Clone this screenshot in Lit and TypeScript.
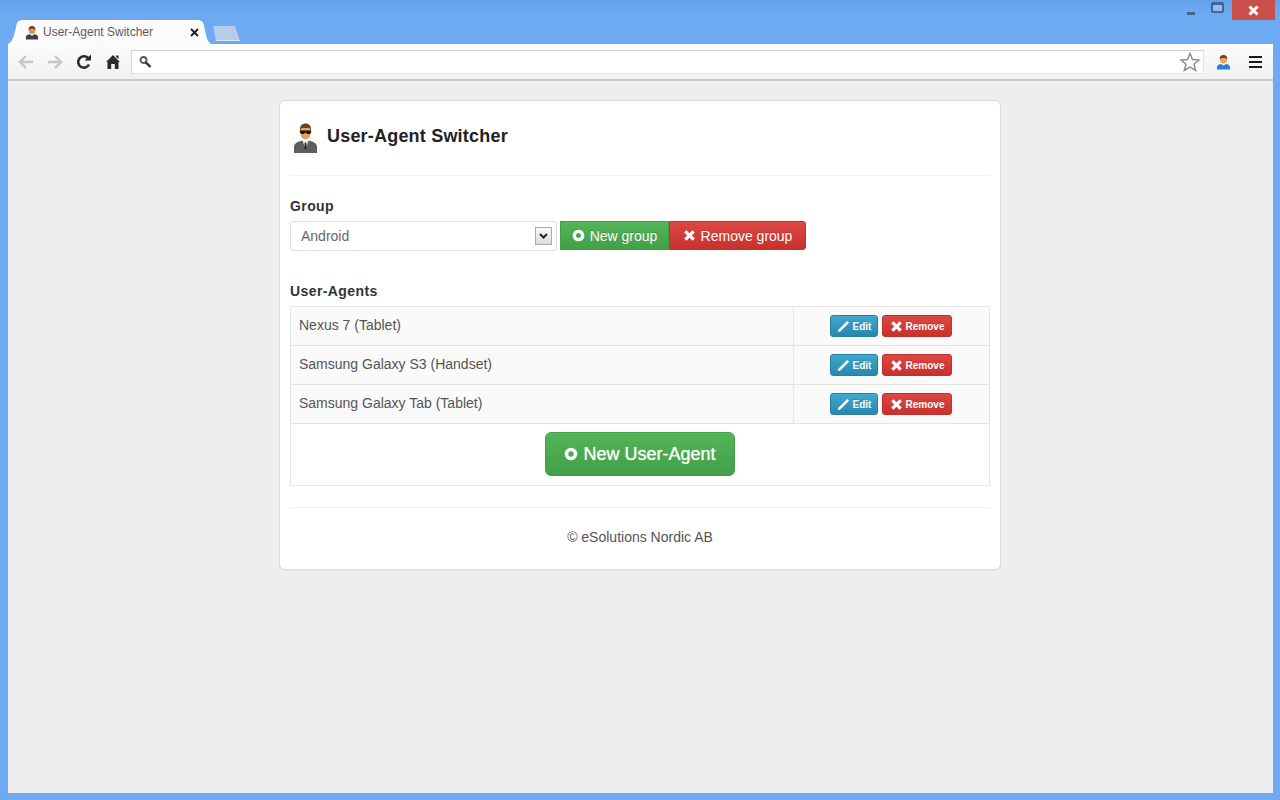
import { LitElement, html, css, svg } from "lit";
import { customElement, property } from "lit/decorators.js";

const agentIcon = svg`
  <path d="M1 30 V24 C1 20 5 18.5 9 17.5 L12.500 20 L16 17.500 C20 18.500 24 20 24 24 V30 Z" fill="#5b5f60"/>
  <path d="M9.500 17.500 L12.500 27 L15.500 17.500 L12.500 19.500 Z" fill="#e8e8e4"/>
  <path d="M11.800 19.500 H13.200 L13.800 25 L12.500 27 L11.200 25 Z" fill="#23262a"/>
  <ellipse cx="12.500" cy="9.500" rx="5.300" ry="7" fill="#e0a35c"/>
  <path d="M7 8 C6.500 2.500 9 0.500 12.500 0.500 C16 0.500 18.500 2.500 18 8 L16.500 5 H8.500 Z" fill="#6b4520"/>
  <path d="M6.800 7.500 H18.200 V9 L16.800 11 H14 L12.800 9.500 H12.200 L11 11 H8.200 L6.800 9 Z" fill="#15171a"/>`;

const userIcon = svg`
  <path d="M1 15 V12.500 C1 10.500 3.500 9.500 5 9.500 L7.500 11 L10 9.500 C11.500 9.500 14 10.500 14 12.500 V15 Z" fill="#2d7fd6"/>
  <circle cx="7.500" cy="5.500" r="3.500" fill="#e8a866"/>
  <path d="M3.800 5 C3.500 1.500 5.500 0.500 7.500 0.500 C9.500 0.500 11.500 1.500 11.200 5 L9.500 3.500 H5.500 Z" fill="#7d3a1b"/>`;

const userIconDark = svg`
  <path d="M1 15 V12.500 C1 10.500 3.500 9.500 5 9.500 L7.500 11 L10 9.500 C11.500 9.500 14 10.500 14 12.500 V15 Z" fill="#3f3f46"/>
  <circle cx="7.500" cy="5.500" r="3.500" fill="#d9965c"/>
  <path d="M3.800 5 C3.500 1.500 5.500 0.500 7.500 0.500 C9.500 0.500 11.500 1.500 11.200 5 L9.500 3.500 H5.500 Z" fill="#7d3a1b"/>`;

@customElement("glyph-icon")
export class GlyphIcon extends LitElement {
  @property({ type: String })
  name: string = "plus";

  static styles = css`
    :host {
      display: inline-flex;
    }
    svg {
      width: 1em;
      height: 1em;
      display: block;
    }
  `;

  render() {
    if (this.name === "plus") {
      return html`<svg viewBox="0 0 14 14">
        <circle cx="7" cy="7" r="4.500" fill="none" stroke="currentColor" stroke-width="3.600"></circle>
      </svg>`;
    }
    if (this.name === "remove") {
      return html`<svg viewBox="0 0 14 14">
        <path d="M2.500 2.500 L11.500 11.500 M11.500 2.500 L2.500 11.500" stroke="currentColor" stroke-width="3.400" fill="none"></path>
      </svg>`;
    }
    return html`<svg viewBox="0 0 14 14">
      <path d="M1 13 L1.500 10.500 L11 1 L13 3 L3.500 12.500 Z" fill="currentColor"></path>
    </svg>`;
  }
}

@customElement("app-root")
export class AppRoot extends LitElement {
  static styles = css`
    :host {
      display: flex;
      flex-direction: column;
      width: 1280px;
      height: 800px;
      box-sizing: border-box;
      padding: 0 7px 7px 8px;
      overflow: hidden;
      background: linear-gradient(#62a0ea, #6eaaf1 12px);
      font-family: "Liberation Sans", Arial, sans-serif;
      color: #333;
    }

    /* browser frame */
    .strip {
      display: flex;
      align-items: flex-end;
      height: 44px;
      flex: none;
    }
    .tab {
      width: 203px;
      height: 24px;
      box-sizing: border-box;
      display: flex;
      align-items: center;
      padding: 0 12px 0 17px;
      gap: 4px;
      background: #fbfbfb;
      clip-path: path("M0 24 C4 22 6 17 8 7 C9 2 10 0 15 0 H189 C194 0 195 2 196 6 C198 15 199 22 203 24 Z");
      font-size: 12px;
      color: #5d5a5e;
    }
    .fav {
      width: 14px;
      height: 15px;
      flex: none;
    }
    .tab span {
      flex: 1;
    }
    .tab-close {
      width: 9px;
      height: 9px;
      flex: none;
    }
    .new-tab {
      width: 29px;
      height: 15px;
      margin: 0 0 3px 0;
      background: #b5cdea;
      border-bottom: 1px solid #dbe7f5;
      box-sizing: border-box;
      clip-path: polygon(2px 0, 24px 0, 29px 100%, 5px 100%);
    }
    .controls {
      margin-left: auto;
      margin-right: -2px;
      align-self: flex-start;
      display: flex;
      align-items: flex-start;
    }
    .win-btn {
      width: 30px;
      height: 20px;
      display: flex;
      align-items: center;
      justify-content: center;
    }
    .min-glyph {
      width: 8px;
      height: 3px;
      margin: 7px 0 0 8px;
      background: #3f6590;
    }
    .max-glyph {
      width: 9px;
      height: 6px;
      margin-top: -6px;
      border: 2px solid #3f6590;
      border-top-width: 3px;
      border-radius: 2px;
      background: #8fbdf2;
    }
    .close {
      width: 43px;
      height: 20px;
      background: #c9504a;
      display: flex;
      align-items: center;
      justify-content: center;
    }
    .close svg {
      width: 11px;
      height: 11px;
    }
    .toolbar {
      height: 37px;
      flex: none;
      box-sizing: border-box;
      display: flex;
      align-items: flex-start;
      padding: 6px 11px 0 3px;
      background: linear-gradient(#fcfcfc, #f1f1f1);
      border-bottom: 2px solid #c9c9c9;
    }
    .nav {
      width: 29px;
      height: 24px;
      display: flex;
      align-items: center;
      justify-content: center;
      flex: none;
    }
    .nav svg {
      width: 18px;
      height: 18px;
    }
    .omnibox {
      flex: 1;
      height: 24px;
      margin: 0 0 0 4px;
      box-sizing: border-box;
      display: flex;
      align-items: center;
      justify-content: space-between;
      padding: 0 2px 0 6px;
      background: #fff;
      border: 1px solid #e2e2e2;
      border-top-color: #cfcfcf;
      border-left-color: #d8d8d8;
    }
    .omnibox svg {
      display: block;
    }
    .search {
      width: 14px;
      height: 14px;
    }
    .star {
      width: 22px;
      height: 22px;
    }
    .avatar {
      width: 15px;
      height: 16px;
      margin: 4px 0 0 12px;
      flex: none;
    }
    .menu {
      width: 13px;
      height: 12px;
      margin: 6px 0 0 18px;
      flex: none;
      box-sizing: border-box;
      border-top: 2px solid #1a1a1a;
      border-bottom: 2px solid #1a1a1a;
      display: flex;
      align-items: center;
    }
    .menu i {
      display: block;
      width: 100%;
      height: 2px;
      background: #1a1a1a;
    }

    /* page */
    .page {
      flex: 1;
      background: #eeedf0;
      display: flex;
      justify-content: center;
      align-items: flex-start;
      padding-top: 19px;
    }
    .card {
      width: 722px;
      height: 470px;
      box-sizing: border-box;
      margin-left: -1px;
      padding: 0 10px;
      background: #fff;
      border: 1px solid #dcdcdc;
      border-radius: 6px;
      box-shadow: 0 1px 1px rgba(0, 0, 0, 0.05);
    }
    .head {
      display: flex;
      align-items: center;
      gap: 9px;
      height: 74px;
      padding: 0 0 0 3px;
      border-bottom: 1px solid #f1f1f1;
    }
    .head svg {
      width: 25px;
      height: 30px;
    }
    h1 {
      margin: -4px 0 0;
      font-size: 18px;
      font-weight: bold;
      letter-spacing: 0.2px;
      color: #222;
    }
    .label {
      display: block;
      font-size: 14px;
      font-weight: bold;
      line-height: 20px;
      letter-spacing: 0.4px;
      color: #333;
    }
    .group {
      margin-top: 20px;
    }
    .group-row {
      display: flex;
      margin-top: 5px;
      height: 30px;
    }
    .select {
      width: 267px;
      height: 30px;
      box-sizing: border-box;
      display: flex;
      align-items: center;
      justify-content: space-between;
      padding: 0 4px 0 10px;
      margin-right: 3px;
      border: 1px solid #ddd;
      border-radius: 3px;
      font-size: 14px;
      color: #666;
    }
    .caret {
      width: 17px;
      height: 18px;
      box-sizing: border-box;
      border: 1px solid #aaa;
      background: linear-gradient(#fafafa, #dcdcdc);
      display: flex;
      align-items: center;
      justify-content: center;
    }
    .caret svg {
      width: 9px;
      height: 6px;
    }
    .btn {
      display: inline-flex;
      align-items: center;
      justify-content: center;
      box-sizing: border-box;
      color: #fff;
      border-radius: 3px;
      white-space: nowrap;
      text-shadow: 0 -1px 0 rgba(0, 0, 0, 0.15);
    }
    .green {
      background: linear-gradient(#53b457, #429f48);
      border: 1px solid #43a049;
    }
    .red {
      background: linear-gradient(#dc4744, #c9302c);
      border: 1px solid #c42f2b;
    }
    .blue {
      background: linear-gradient(#3fa9cf, #2787ad);
      border: 1px solid #2780a3;
    }
    .group-row .btn {
      height: 29px;
      font-size: 14px;
      gap: 5px;
    }
    .group-row glyph-icon {
      font-size: 13px;
    }
    .new-group {
      width: 109px;
      border-radius: 0;
    }
    .remove-group {
      width: 137px;
      border-radius: 0 3px 3px 0;
    }
    .agents {
      margin-top: 30px;
    }
    .table {
      margin-top: 5px;
      width: 700px;
      border: 1px solid #e6e6e6;
      box-sizing: border-box;
    }
    .row {
      display: grid;
      grid-template-columns: 503px 1fr;
      height: 39px;
      box-sizing: border-box;
      background: #fafafa;
      border-bottom: 1px solid #e4e4e4;
    }
    .row .name {
      display: flex;
      align-items: center;
      padding: 0 0 2px 8px;
      font-size: 14px;
      color: #555;
      border-right: 1px solid #e8e8e8;
    }
    .row .actions {
      display: flex;
      align-items: center;
      gap: 4px;
      padding-left: 36px;
    }
    .row .btn {
      height: 22px;
      font-size: 10px;
      font-weight: bold;
      gap: 3px;
    }
    .row glyph-icon {
      font-size: 13px;
    }
    .edit {
      width: 48px;
    }
    .remove {
      width: 70px;
    }
    .add-row {
      height: 61px;
      display: flex;
      justify-content: center;
      align-items: flex-start;
      padding-top: 8px;
      box-sizing: border-box;
    }
    .add {
      width: 190px;
      height: 44px;
      gap: 5px;
      font-size: 18px;
      border-radius: 6px;
      text-shadow: 0 0 1px rgba(255, 255, 255, 0.7);
    }
    .add glyph-icon {
      font-size: 14px;
    }
    .foot {
      margin-top: 21px;
      padding-top: 19px;
      border-top: 1px solid #f1f1f1;
      text-align: center;
      font-size: 14px;
      line-height: 20px;
      color: #555;
    }
  `;

  agents = [
    "Nexus 7 (Tablet)",
    "Samsung Galaxy S3 (Handset)",
    "Samsung Galaxy Tab (Tablet)",
  ];

  renderFrame() {
    return html`
      <div class="strip">
        <div class="tab">
          <svg class="fav" viewBox="0 0 15 15">${userIconDark}</svg>
          <span>User-Agent Switcher</span>
          <svg class="tab-close" viewBox="0 0 9 9">
            <path d="M1 1 L8 8 M8 1 L1 8" stroke="#222" stroke-width="2"></path>
          </svg>
        </div>
        <div class="new-tab"></div>
        <div class="controls">
          <div class="win-btn"><div class="min-glyph"></div></div>
          <div class="win-btn"><div class="max-glyph"></div></div>
          <div class="close">
            <svg viewBox="0 0 11 11">
              <path d="M1.500 1.500 L9.500 9.500 M9.500 1.500 L1.500 9.500" stroke="#fff" stroke-width="3"></path>
            </svg>
          </div>
        </div>
      </div>
      <div class="toolbar">
        <div class="nav">
          <svg viewBox="0 0 18 18" fill="none" stroke="#c4c6c8" stroke-width="2.400">
            <path d="M16 9 H3 M9 3 L3 9 L9 15"></path>
          </svg>
        </div>
        <div class="nav">
          <svg viewBox="0 0 18 18" fill="none" stroke="#c4c6c8" stroke-width="2.400">
            <path d="M2 9 H15 M9 3 L15 9 L9 15"></path>
          </svg>
        </div>
        <div class="nav">
          <svg viewBox="0 0 18 18">
            <path d="M14 11.500 A5.700 5.700 0 1 1 13 5" fill="none" stroke="#2b2b2b" stroke-width="2.600"></path>
            <path d="M9.500 7.500 H16 V1.500 Z" fill="#2b2b2b"></path>
          </svg>
        </div>
        <div class="nav">
          <svg viewBox="0 0 18 18">
            <path d="M9 2 L16 9 H14.500 V16 H10.800 V11 H7.200 V16 H3.500 V9 H2 Z M12 2.500 H14.500 V6 L12 3.800 Z" fill="#2b2b2b"></path>
          </svg>
        </div>
        <div class="omnibox">
          <svg class="search" viewBox="0 0 14 14">
            <circle cx="5.500" cy="5" r="3" fill="none" stroke="#555" stroke-width="1.800"></circle>
            <path d="M7.800 7.300 L12.500 12" stroke="#333" stroke-width="2.400"></path>
          </svg>
          <svg class="star" viewBox="0 0 22 22">
            <path d="M11 2.500 L13.500 8.500 L20 9 L15 13.200 L16.600 19.500 L11 16.200 L5.400 19.500 L7 13.200 L2 9 L8.500 8.500 Z" fill="#fff" stroke="#8e8e8e" stroke-width="1.500"></path>
          </svg>
        </div>
        <svg class="avatar" viewBox="0 0 15 15">${userIcon}</svg>
        <div class="menu"><i></i></div>
      </div>
    `;
  }

  render() {
    return html`
      ${this.renderFrame()}
      <div class="page">
        <div class="card">
          <div class="head">
            <svg viewBox="0 0 25 30">${agentIcon}</svg>
            <h1>User-Agent Switcher</h1>
          </div>
          <div class="group">
            <span class="label">Group</span>
            <div class="group-row">
              <div class="select">
                <span>Android</span>
                <span class="caret">
                  <svg viewBox="0 0 9 6">
                    <path d="M1 1 L4.500 4.500 L8 1" fill="none" stroke="#222" stroke-width="2"></path>
                  </svg>
                </span>
              </div>
              <div class="btn green new-group"><glyph-icon name="plus"></glyph-icon>New group</div>
              <div class="btn red remove-group"><glyph-icon name="remove"></glyph-icon>Remove group</div>
            </div>
          </div>
          <div class="agents">
            <span class="label">User-Agents</span>
            <div class="table">
              ${this.agents.map(
                (a) => html`
                  <div class="row">
                    <div class="name">${a}</div>
                    <div class="actions">
                      <div class="btn blue edit"><glyph-icon name="pencil"></glyph-icon>Edit</div>
                      <div class="btn red remove"><glyph-icon name="remove"></glyph-icon>Remove</div>
                    </div>
                  </div>
                `
              )}
              <div class="add-row">
                <div class="btn green add"><glyph-icon name="plus"></glyph-icon>New User-Agent</div>
              </div>
            </div>
          </div>
          <div class="foot">© eSolutions Nordic AB</div>
        </div>
      </div>
    `;
  }
}
